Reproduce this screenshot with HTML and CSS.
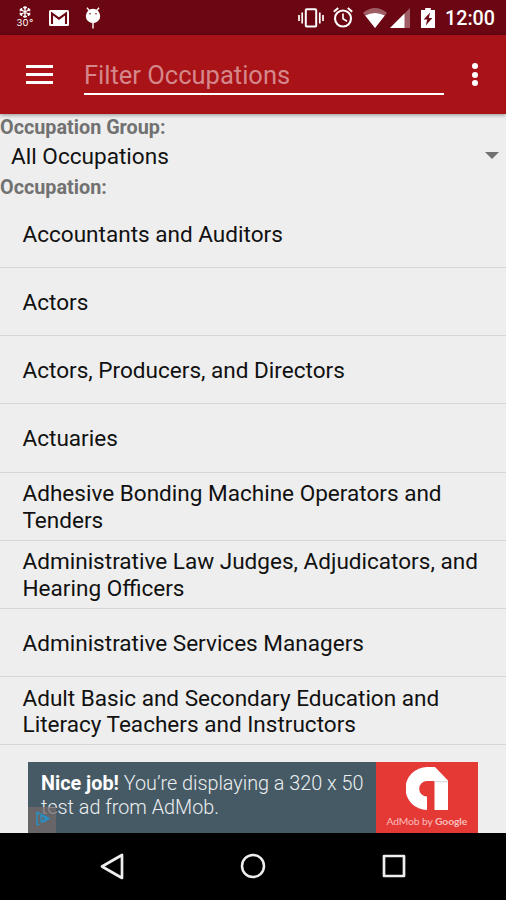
FILE: index.html
```
<!DOCTYPE html>
<html lang="en">

<head>
    <meta charset="UTF-8">
    <title>Occupations</title>
    <link rel="stylesheet" href="styles.css">
</head>

<body>
    <div class="status">
        <div class="weather">
            <svg width="12" height="12" viewBox="0 0 12 12" fill="none" stroke="#fff" stroke-width="1.3">
                <path d="M6 0v12M.8 3l10.4 6M.8 9l10.4-6M4.2 1L6 2.6 7.8 1M4.2 11L6 9.4 7.8 11M.7 5l2.2-.8L2.5 2M11.3 7l-2.2.8.4 2.2M.7 7l2.2.8L2.5 10M11.3 5l-2.2-.8.4-2.2" />
            </svg>
            <span>30°</span>
        </div>
        <svg class="mail" width="20" height="16" viewBox="0 0 20 16">
            <rect width="20" height="16" rx="1.5" fill="#fff" />
            <path d="M3 14V3.5l7 5.2 7-5.2V14" fill="none" stroke="#6b0712" stroke-width="2.1" />
        </svg>
        <svg class="droid" width="16" height="22" viewBox="0 0 16 22">
            <path d="M2 .8l2.4 3M14 .8l-2.4 3M8 15v6.5" stroke="#fff" stroke-width="1.4" />
            <circle cx="8" cy="9" r="7.2" fill="#fff" />
            <circle cx="5" cy="6.8" r=".8" fill="#6b0712" />
            <circle cx="11" cy="6.8" r=".8" fill="#6b0712" />
        </svg>
        <div class="status_right">
            <svg width="26" height="20" viewBox="0 0 26 20" fill="none" stroke="#fff">
                <rect x="7.8" y="1.3" width="10.4" height="17.2" rx="1" stroke-width="2" />
                <path d="M4.2 4.5v11M21.8 4.5v11" stroke-width="1.7" />
                <path d="M1 7v6M25 7v6" stroke-width="1.7" />
            </svg>
            <svg class="alarm" width="20" height="21" viewBox="0 0 20 21" fill="none" stroke="#fff">
                <circle cx="10" cy="11.5" r="8" stroke-width="2.1" />
                <path d="M10 6.5v5.3l4 2.4" stroke-width="1.6" />
                <path d="M.8 4.8L5.2 1M19.2 4.8L14.8 1" stroke-width="2" />
            </svg>
            <svg class="wifi" width="24" height="20" viewBox="0 0 24 20" fill="#fff">
                <path d="M12 20L0 4.8Q12-4.6 24 4.8z" opacity=".35" />
                <path d="M12 20L2.2 7.6Q12 2.4 21.8 7.6z" />
            </svg>
            <svg class="signal" width="20" height="20" viewBox="0 0 20 20" fill="#fff">
                <path d="M0 20L20 0v20z" opacity=".35" />
                <path d="M0 20L14.5 5.5V20z" />
            </svg>
            <svg class="battery" width="14" height="20" viewBox="0 0 14 20">
                <path d="M4.2 0h5.6v2H14v18H0V2h4.2z" fill="#fff" />
                <path d="M9.2 4.5L2.6 11.5h3.6l-1.4 6 6.6-7.5H7.8z" fill="#6b0712" />
            </svg>
            <span class="time">12:00</span>
        </div>
    </div>

    <div class="toolbar">
        <div class="burger">
            <i></i>
            <i></i>
            <i></i>
        </div>
        <input type="text" class="filter" placeholder="Filter Occupations">
        <div class="more">
            <i></i>
            <i></i>
            <i></i>
        </div>
    </div>

    <div class="content">
        <p class="label">Occupation Group:</p>
        <div class="spinner">
            <span>All Occupations</span>
            <div class="arrow"></div>
        </div>
        <p class="label">Occupation:</p>
        <ul class="list">
            <li>Accountants and Auditors</li>
            <li>Actors</li>
            <li>Actors, Producers, and Directors</li>
            <li>Actuaries</li>
            <li>Adhesive Bonding Machine Operators and Tenders</li>
            <li>Administrative Law Judges, Adjudicators, and Hearing Officers</li>
            <li>Administrative Services Managers</li>
            <li>Adult Basic and Secondary Education and Literacy Teachers and Instructors</li>
        </ul>
        <div class="ad">
            <div class="ad_text">
                <p><b>Nice job!</b> You’re displaying a 320 x 50</p>
                <p>test ad from AdMob.</p>
                <div class="ad_choices">
                    <svg width="14" height="15" viewBox="0 0 14 15" fill="none" stroke="#2a8fc0" stroke-width="1.5" stroke-linejoin="round">
                        <path d="M3.5 13.3L1 13.8V1.2l12 6.3-6.8 3.8M5.2 10.8V4.4l5.6 3.1z" />
                    </svg>
                </div>
            </div>
            <div class="ad_logo">
                <svg width="42" height="43" viewBox="0 0 42 43">
                    <path d="M21 43A21.5 21.5 0 0 1 21 0h8l13 13.5V43H28.5V14H21a7.8 7.8 0 0 0 0 15.6z" fill="#fff" />
                    <path d="M28.5 14H42v1.3H28.5z" fill="#ddd" />
                </svg>
                <span>AdMob by <b>Google</b></span>
            </div>
        </div>
    </div>

    <div class="nav">
        <svg width="24" height="27" viewBox="0 0 24 27" fill="none" stroke="#eee" stroke-width="2.7" stroke-linejoin="round">
            <path d="M22 2v23L2 13.5z" />
        </svg>
        <svg width="26" height="26" viewBox="0 0 26 26" fill="none" stroke="#eee" stroke-width="2.5">
            <circle cx="13" cy="13" r="11" />
        </svg>
        <svg width="24" height="24" viewBox="0 0 24 24" fill="none" stroke="#eee" stroke-width="2.7" stroke-linejoin="round">
            <rect x="2" y="2" width="20" height="20" />
        </svg>
    </div>
</body>

</html>
```
FILE: styles.css
```
* {
    margin: 0;
    padding: 0;
    box-sizing: border-box;
}

body {
    width: 506px;
    height: 900px;
    display: flex;
    flex-direction: column;
    overflow: hidden;
    background-color: #eee;
    font-family: Roboto, "Liberation Sans", sans-serif;
    color: #111;
}

svg {
    display: block;
    flex-shrink: 0;
}

.status {
    height: 35px;
    flex-shrink: 0;
    display: flex;
    align-items: center;
    padding: 0 11px 0 15px;
    background-color: #6b0712;
    color: white;
}

.weather {
    width: 20px;
    display: flex;
    flex-direction: column;
    align-items: center;
    font-family: Inter, sans-serif;
    font-size: 9.5px;
    line-height: 10px;
    letter-spacing: 0.3px;
    padding-bottom: 2px;
}

.weather svg {
    margin-top: 1px;
}

.mail {
    margin-left: 14px;
}

.droid {
    margin-left: 16px;
}

.status_right {
    display: flex;
    align-items: center;
    margin-left: auto;
}

.alarm {
    margin-left: 9px;
}

.wifi {
    margin-left: 10px;
}

.signal {
    margin-left: 3px;
}

.battery {
    margin-left: 11px;
}

.time {
    margin: 1px 0 0 10px;
    font-size: 19.7px;
    font-weight: 500;
    line-height: 35px;
}

.toolbar {
    height: 79px;
    flex-shrink: 0;
    display: flex;
    align-items: center;
    padding: 0 28px 0 26px;
    background-color: #a91217;
    box-shadow: 0 1px 4px rgba(0, 0, 0, 0.4);
    z-index: 1;
}

.burger {
    width: 27px;
    display: flex;
    flex-direction: column;
    gap: 5px;
    margin-bottom: 1px;
}

.burger i {
    height: 3px;
    background-color: white;
}

.filter {
    width: 360px;
    height: 41px;
    margin: 0 0 0 31px;
    padding-top: 2px;
    border: none;
    border-bottom: 2px solid white;
    outline: none;
    background: none;
    font-family: inherit;
    font-size: 25.5px;
    color: white;
}

.filter::placeholder {
    color: #d4888b;
}

.more {
    display: flex;
    flex-direction: column;
    gap: 2.5px;
    margin-left: auto;
}

.more i {
    width: 6px;
    height: 6px;
    border-radius: 50%;
    background-color: white;
}

.content {
    height: 718.5px;
    flex-shrink: 0;
}

.label {
    height: 23px;
    padding-top: 1.5px;
    font-size: 19.8px;
    font-weight: 700;
    line-height: 23px;
    color: #717171;
}

.spinner {
    height: 37px;
    display: flex;
    align-items: center;
    justify-content: space-between;
    padding: 2px 7px 0 11px;
    font-size: 22.6px;
}

.arrow {
    border: 7px solid transparent;
    border-top-color: #717171;
    border-bottom: none;
    margin-bottom: 2px;
}

.list {
    list-style: none;
    padding-top: 2.8px;
}

.list li {
    height: 68.2px;
    display: flex;
    align-items: center;
    padding: 3px 22.5px 0;
    border-bottom: 1px solid #d6d6d6;
    font-size: 22.56px;
    line-height: 26.6px;
}

.ad {
    width: 450px;
    height: 71px;
    display: flex;
    margin: 16.7px 0 0 28px;
}

.ad_text {
    flex: 1;
    position: relative;
    padding: 10.5px 0 0 13px;
    background-color: #465a65;
    color: #eceff1;
    font-size: 19.8px;
    font-weight: 300;
    line-height: 23.5px;
    white-space: nowrap;
}

.ad_text b {
    font-weight: 700;
    color: white;
}

.ad_choices {
    position: absolute;
    left: 0;
    bottom: 0;
    width: 28px;
    height: 26px;
    padding: 4px 0 0 8px;
    background-color: rgba(115, 105, 105, 0.75);
}

.ad_logo {
    width: 102.5px;
    display: flex;
    flex-direction: column;
    align-items: center;
    padding-top: 5px;
    background-color: #e53935;
    color: #f9bdbb;
    font-family: Lato, sans-serif;
    font-size: 10.3px;
    line-height: 15px;
    letter-spacing: -0.1px;
    white-space: nowrap;
}

.ad_logo svg {
    margin-bottom: 4px;
}

.nav {
    flex: 1;
    display: flex;
    align-items: center;
    justify-content: space-between;
    padding: 0 100px;
    background-color: black;
}
```
